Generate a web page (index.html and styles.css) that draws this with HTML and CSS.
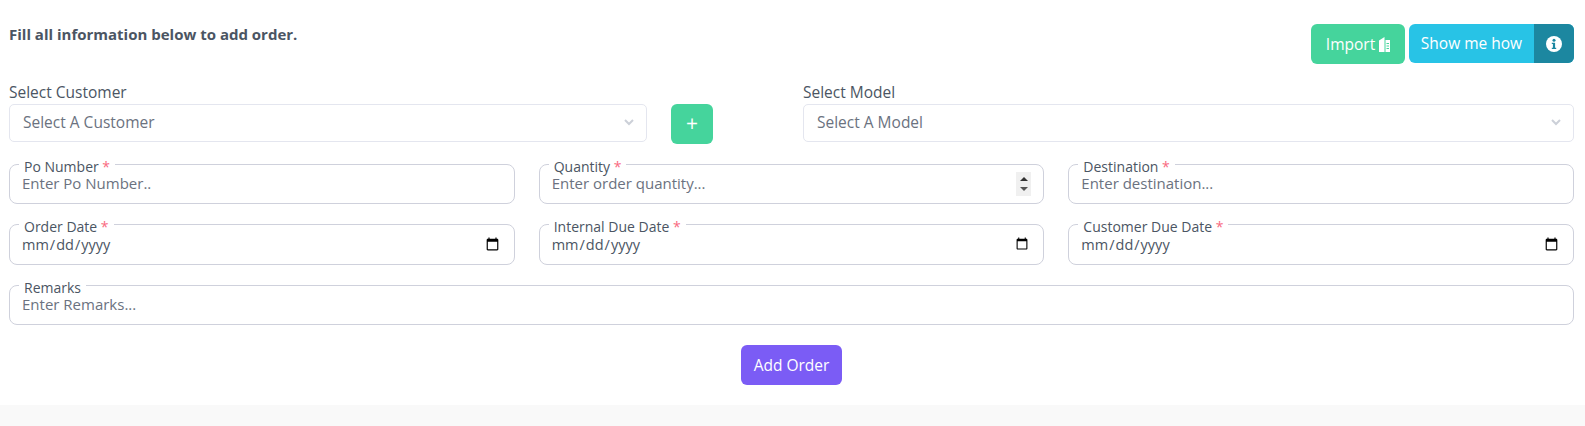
FILE: index.html
```html
<!DOCTYPE html>
<html lang="en">

<head>
    <meta charset="UTF-8">
    <meta name="viewport" content="width=device-width, initial-scale=1.0">
    <title>Add Order</title>
    <link rel="stylesheet" href="styles.css">
</head>

<body>
    <form class="card">
        <div class="top">
            <p class="intro">Fill all information below to add order.</p>
            <div class="actions">
                <button type="button" class="btn btn-green btn-import">Import
                    <svg class="doc" width="11" height="15" viewBox="0 0 11 15">
                        <path fill="#fff" d="M0 3.500 5.500 0V15H0Z" />
                        <path fill="#fff" d="M6.500 3H11V15H6.500zM7.500 6v1H10V6zM7.500 8.500v1H10v-1zM7.500 11v1H10v-1z" fill-rule="evenodd" />
                    </svg>
                </button>
                <button type="button" class="btn-how">
                    <span class="how-text">Show me how</span>
                    <span class="how-icon">
                        <svg width="16" height="16" viewBox="0 0 16 16">
                            <circle cx="8" cy="8" r="8" fill="#fff" />
                            <circle cx="8" cy="4.200" r="1.500" fill="#1c87a0" />
                            <path fill="#1c87a0" d="M5.800 6.700h3.300v5h1.100v1.300H5.800v-1.300h1.100V8H5.800z" />
                        </svg>
                    </span>
                </button>
            </div>
        </div>

        <div class="selects">
            <div class="field">
                <label class="select-label">Select Customer</label>
                <div class="select">
                    <span>Select A Customer</span>
                    <svg width="10" height="7" viewBox="0 0 10 7"><path d="M1 1 5 5 9 1" fill="none" stroke="#ccd0d8" stroke-width="2" /></svg>
                </div>
            </div>
            <button type="button" class="btn btn-green btn-plus">+</button>
            <div class="field">
                <label class="select-label">Select Model</label>
                <div class="select">
                    <span>Select A Model</span>
                    <svg width="10" height="7" viewBox="0 0 10 7"><path d="M1 1 5 5 9 1" fill="none" stroke="#ccd0d8" stroke-width="2" /></svg>
                </div>
            </div>
        </div>

        <div class="grid">
            <fieldset class="box">
                <legend>Po Number <span class="req">*</span></legend>
                <input type="text" placeholder="Enter Po Number..">
            </fieldset>
            <fieldset class="box">
                <legend>Quantity <span class="req">*</span></legend>
                <input type="number" placeholder="Enter order quantity...">
                <span class="spin">
                    <svg width="10" height="24" viewBox="0 0 10 24">
                        <path d="M5 5 9 9H1Z" fill="#333" />
                        <path d="M5 19 9 15H1Z" fill="#555" />
                    </svg>
                </span>
            </fieldset>
            <fieldset class="box">
                <legend>Destination <span class="req">*</span></legend>
                <input type="text" placeholder="Enter destination...">
            </fieldset>
            <fieldset class="box">
                <legend>Order Date <span class="req">*</span></legend>
                <input type="date">
            </fieldset>
            <fieldset class="box">
                <legend>Internal Due Date <span class="req">*</span></legend>
                <input type="date">
            </fieldset>
            <fieldset class="box">
                <legend>Customer Due Date <span class="req">*</span></legend>
                <input type="date">
            </fieldset>
            <fieldset class="box wide">
                <legend>Remarks</legend>
                <input type="text" placeholder="Enter Remarks...">
            </fieldset>
        </div>

        <div class="submit">
            <button type="button" class="btn btn-purple">Add Order</button>
        </div>
    </form>
</body>

</html>
```

FILE: styles.css
```css
* {
    box-sizing: border-box;
}

body {
    margin: 0;
    height: 426px;
    overflow: hidden;
    background-color: #f9f9f9;
    font-family: "Open Sans", "Lato", sans-serif;
    font-size: 15.500px;
    color: #4b5563;
}

.card {
    height: 405px;
    padding: 24px 11px 0 9px;
    background-color: #fff;
}

.top {
    display: flex;
    justify-content: space-between;
    align-items: flex-start;
    height: 56px;
}

.intro {
    margin: 1px 0 0;
    font-size: 15px;
    font-weight: 700;
    line-height: 18px;
}

.actions {
    display: flex;
    gap: 4px;
}

.btn {
    border: none;
    border-radius: 6px;
    color: #fff;
    font-family: inherit;
    font-size: 15.500px;
}

.btn-green {
    background-color: #45d49c;
}

.btn-purple {
    width: 101px;
    height: 40px;
    background-color: #7b5cf5;
}

.btn-import {
    display: flex;
    align-items: center;
    justify-content: center;
    gap: 4px;
    width: 94px;
    height: 40px;
    padding: 0;
}

.btn-how {
    display: flex;
    width: 165px;
    height: 39px;
    padding: 0;
    border: none;
    border-radius: 6px;
    overflow: hidden;
    background-color: #28c3e6;
    color: #fff;
    font-family: inherit;
    font-size: 15.500px;
}

.how-text {
    flex: 1;
    line-height: 39px;
    text-align: center;
}

.how-icon {
    display: flex;
    align-items: center;
    justify-content: center;
    width: 40px;
    height: 100%;
    background-color: #1c87a0;
}

.selects {
    display: grid;
    grid-template-columns: 638px 108px 1fr;
    gap: 24px;
    align-items: end;
    height: 62px;
}

.select-label {
    display: block;
    height: 23px;
    line-height: 22px;
}

.select {
    display: flex;
    justify-content: space-between;
    align-items: center;
    height: 38px;
    padding: 0 12px 2px 13px;
    border: 1px solid #e4e6ef;
    border-radius: 5px;
    background-color: #fff;
    color: #6b7280;
}

.btn-plus {
    width: 42px;
    height: 40px;
    padding: 0 0 3px;
    font-size: 21px;
    margin-bottom: -2px;
}

.grid {
    display: grid;
    grid-template-columns: repeat(3, 1fr);
    column-gap: 24px;
    row-gap: 13px;
    margin-top: 15px;
}

.box {
    position: relative;
    min-width: 0;
    margin: 0;
    padding: 0 12px 9px;
    border: 1px solid #cfd1dc;
    border-radius: 8px;
}

.wide {
    grid-column: 1 / 4;
}

legend {
    height: 15px;
    margin-left: -3px;
    padding: 0 5px;
    font-size: 14px;
    line-height: 19px;
}

.req {
    color: #f9697f;
}

.box input {
    display: block;
    width: 100%;
    height: 22px;
    padding: 0;
    border: none;
    outline: none;
    background: transparent;
    color: #4b5563;
    font-family: inherit;
    font-size: 15px;
}

.box input[type="date"] {
    height: 23px;
    padding-top: 2px;
    font-size: 14.500px;
}

.box input::-webkit-datetime-edit {
    margin-left: -1px;
}

.box input::placeholder {
    color: #6b7280;
    opacity: 1;
}

.box input::-webkit-inner-spin-button {
    display: none;
}

/* drawn by hand, the native one only shows on hover */
.spin {
    position: absolute;
    top: 0;
    right: 12px;
    display: flex;
    justify-content: center;
    width: 15px;
    height: 24px;
    background-color: #f0f0f0;
}

.submit {
    display: flex;
    justify-content: center;
    margin-top: 20px;
}
```
